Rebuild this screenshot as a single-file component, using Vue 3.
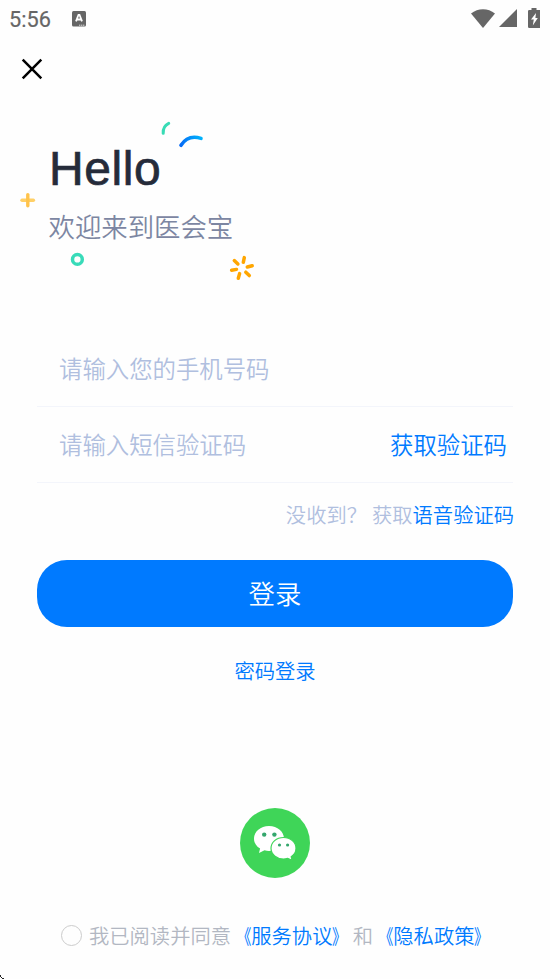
<template>
  <div class="login-page" lang="zh-CN">
    <header class="status-bar">
      <span class="time">5:56</span>
      <svg class="ime-icon" width="14" height="16" viewBox="0 0 14 16">
        <rect width="14" height="15.5" rx="1.5" fill="#666" />
        <path d="M4 10.4 6.5 3.8H7.5L10 10.4M5 8.5H9" fill="none" stroke="#fff" stroke-width="1.8" />
        <path d="M7 14.2h6" stroke="#ddd" stroke-width="1" stroke-dasharray="1.4 .6" />
      </svg>
      <div class="system-icons">
        <svg width="24" height="19" viewBox="0 0 24 19">
          <path d="M0 4.5C7-1.2 17-1.2 24 4.5L12 19Z" fill="#666" />
        </svg>
        <svg class="signal-icon" width="18" height="18" viewBox="0 0 18 18">
          <path d="M0 18 18 0V18Z" fill="#666" />
        </svg>
        <svg class="battery-icon" width="12" height="20" viewBox="0 0 12 20">
          <path d="M1.3 2H3.5V0H8.5V2H12V20H1.3Q0 20 0 18.7V3.3Q0 2 1.3 2Z" fill="#666" />
          <path d="M8 5 3 11.5H5.8L4.8 17.5L9.8 10H7.4Z" fill="#fff" />
        </svg>
      </div>
    </header>

    <button class="close-btn" type="button" aria-label="关闭">
      <svg width="22" height="22" viewBox="0 0 22 22">
        <path d="M1.7 1.7 20.3 20.3M20.3 1.7 1.7 20.3" fill="none" stroke="#000" stroke-width="2.5" />
      </svg>
    </button>

    <section class="welcome">
      <h1>Hello</h1>
      <p>欢迎来到医会宝</p>
      <!-- Confetti around the greeting -->
      <svg class="confetti" width="260" height="180" viewBox="0 0 260 180" fill="none" stroke-linecap="round">
        <defs>
          <linearGradient id="blueArc" x1="170" y1="36" x2="192" y2="28" gradientUnits="userSpaceOnUse">
            <stop offset="0" stop-color="#0668f5" />
            <stop offset="1" stop-color="#00b4fc" />
          </linearGradient>
        </defs>
        <path d="M153.2 23.3Q152.8 16 158.7 13.3" stroke="#38dbb5" stroke-width="3" />
        <path d="M171 35.3Q178 24.3 191 28.4" stroke="url(#blueArc)" stroke-width="3.6" />
        <path d="M12 90.2H23.4" stroke="#ffd067" stroke-width="3.4" />
        <path d="M17.8 84.6V95.8" stroke="#ffc34b" stroke-width="3.4" />
        <circle cx="67.4" cy="149.4" r="4.9" stroke="#38dbb9" stroke-width="3.5" />
        <path
          d="M234.3 147.6 233.3 152.3M242.2 155.7 237.3 157M239.3 165.6 235.8 162.2M228.3 168.3 229.6 163.6M221.6 160.3 226.5 159.4M224.3 150.6 227.9 154"
          stroke="#ffa600"
          stroke-width="3.5"
        />
      </svg>
    </section>

    <form class="login-form" @submit.prevent>
      <div class="field">
        <input v-model="phone" type="tel" placeholder="请输入您的手机号码" />
      </div>
      <div class="field">
        <input v-model="code" type="text" placeholder="请输入短信验证码" />
        <button class="get-code" type="button">获取验证码</button>
      </div>
      <div class="voice-row">
        <span>没收到？</span>
        <span class="voice-get">获取<a>语音验证码</a></span>
      </div>
      <button class="login-btn" type="submit">登录</button>
      <a class="password-login">密码登录</a>
    </form>

    <button class="wechat" type="button" aria-label="微信登录">
      <svg width="70" height="70" viewBox="0 0 70 70">
        <circle cx="35" cy="35" r="35" fill="#3fd558" />
        <path d="M29 18C20.5 18 14 23.6 14 30.7C14 34.8 16.3 38.2 20.1 40.5L19 45L24.5 42.2C26 42.7 27.5 42.9 29 42.9C37.5 42.9 44 37.6 44 30.7C44 23.6 37.5 18 29 18Z" fill="#fff" />
        <path d="M43.5 29.5C50.5 29.5 56 34.2 56 40.3C56 43.9 54.3 46.8 51.2 48.7L52.2 52.3L47.6 50.3C46.3 50.8 44.9 51 43.5 51C36.5 51 31 46.3 31 40.3C31 34.2 36.5 29.5 43.5 29.5Z" fill="#fff" stroke="#3fd558" stroke-width="1.2" />
        <g fill="#35a76d">
          <circle cx="24.2" cy="26.6" r="2.2" />
          <circle cx="34.4" cy="26.6" r="2.2" />
          <circle cx="39.5" cy="37" r="1.6" />
          <circle cx="47.6" cy="37" r="1.6" />
        </g>
      </svg>
    </button>

    <footer class="agreement">
      <span class="radio" :class="{ checked: agreed }" @click="agreed = !agreed"></span>
      <span>
        我已阅读并同意<a><i class="open">《</i>服务协议<i class="close">》</i></a>和<a><i class="open">《</i>隐私政策<i class="close">》</i></a>
      </span>
    </footer>
    <svg class="corner-mark" width="4" height="4" viewBox="0 0 4 4">
      <path d="M0 0h1v2H0zM1 2h1v1H1zM2 3h2v1H2z" fill="#222" />
    </svg>
  </div>
</template>

<script setup>
import { ref } from 'vue';

const phone = ref('');
const code = ref('');
const agreed = ref(false);
</script>

<style>
body {
  margin: 0;
  background: #fefefe;
}
</style>

<style scoped>
.login-page {
  position: relative;
  display: flex;
  flex-direction: column;
  box-sizing: border-box;
  width: 550px;
  height: 979px;
  overflow: hidden;
  font-family: "Noto Sans CJK SC", sans-serif;
  font-weight: 350;
}

button {
  padding: 0;
  border: 0;
  background: none;
  font-family: inherit;
  font-weight: inherit;
  cursor: pointer;
}

svg {
  display: block;
}

a {
  color: #007aff;
  cursor: pointer;
}

.status-bar {
  display: flex;
  align-items: center;
  box-sizing: border-box;
  height: 38px;
  padding: 0 10px 0 9px;
}

.time {
  width: 63px;
  padding-top: 1px;
  color: #666;
  font: 400 21.7px/38px Roboto, sans-serif;
  -webkit-text-stroke: 0.2px #666;
}

.ime-icon {
  margin-bottom: 1px;
}

.system-icons {
  display: flex;
  align-items: center;
  margin-left: auto;
  margin-bottom: 2px;
}

.signal-icon {
  margin-left: 4px;
}

.battery-icon {
  margin-left: 11px;
}

.close-btn {
  align-self: flex-start;
  margin: 20px 0 0 21px;
}

.welcome {
  position: relative;
  margin: 60px 0 0 48px;
}

.welcome h1 {
  margin: 1px 0 0 1px;
  color: #252b3a;
  font-family: "Liberation Sans", sans-serif;
  font-size: 48px;
  font-weight: 400;
  line-height: 56px;
  letter-spacing: 0.6px;
  -webkit-text-stroke: 0.7px #252b3a;
}

.welcome p {
  margin: 9px 0 0 0.5px;
  color: #7c86a2;
  font-size: 26.4px;
  line-height: 40px;
}

.confetti {
  position: absolute;
  top: -30px;
  left: -38px;
}

.login-form {
  display: flex;
  flex-direction: column;
  margin: 85px 37px 0;
}

.field {
  display: flex;
  align-items: center;
  box-sizing: border-box;
  height: 76px;
  padding: 0 6px 1px 22px;
  border-bottom: 1px solid #f3f5fb;
}

.field input {
  flex: 1;
  min-width: 0;
  height: 40px;
  padding: 0;
  border: 0;
  outline: none;
  background: none;
  color: #252b3a;
  font-family: inherit;
  font-size: 23.4px;
  font-weight: inherit;
}

.field input::placeholder {
  color: #b0bfdf;
}

.get-code {
  color: #007aff;
  font-size: 23.4px;
  line-height: 40px;
}

.voice-row {
  display: flex;
  justify-content: flex-end;
  margin: 16px -1px 0 0;
  color: #b0bfdf;
  font-size: 20.3px;
  line-height: 30px;
}

.voice-get {
  margin-left: 5px;
}

.login-btn {
  height: 67px;
  margin-top: 31px;
  padding-bottom: 2px;
  border-radius: 30px;
  background: #007aff;
  color: #fff;
  font-size: 26.4px;
}

.password-login {
  align-self: center;
  margin-top: 28px;
  font-size: 20.3px;
  line-height: 30px;
}

.wechat {
  align-self: center;
  margin-top: 123px;
}

.agreement {
  display: flex;
  align-items: center;
  margin: 42px 0 0 61px;
  color: #b2b7c2;
  font-size: 20.3px;
  line-height: 30px;
}

/* Condensed book-title marks that hug the document name */
.agreement i {
  display: inline-block;
  font-style: normal;
  font-weight: 400;
  transform: scaleX(0.72);
}

.agreement .open {
  transform-origin: right center;
}

.agreement .close {
  transform-origin: left center;
}

.radio {
  box-sizing: border-box;
  width: 21px;
  height: 21px;
  margin-right: 7px;
  border: 1px solid #ccc;
  border-radius: 50%;
}

.radio.checked {
  border: 6px solid #007aff;
}

.corner-mark {
  margin-top: auto;
}
</style>
